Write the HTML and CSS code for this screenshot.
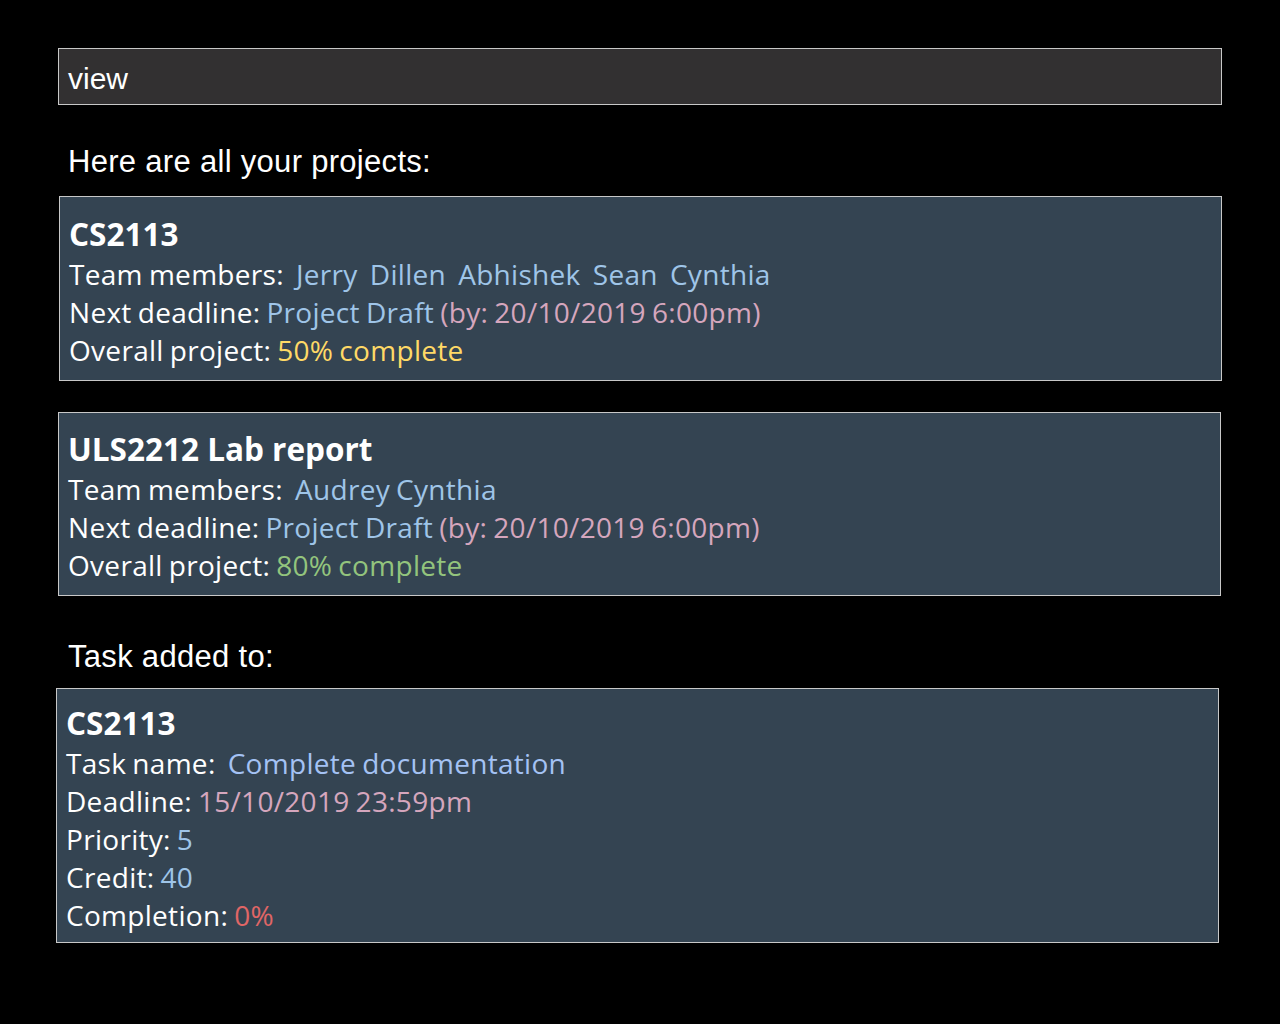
FILE: index.html
```html
<!DOCTYPE html>
<html>
<head>
<meta charset="utf-8">
<link rel="stylesheet" href="styles.css">
</head>
<body>
<main class="page">
  <div class="command">view</div>
  <p class="heading first">Here are all your projects:</p>
  <section class="card card-a">
    <h2 class="title">CS2113</h2>
    <div class="line">Team members:  <span class="blue">Jerry  Dillen  Abhishek  Sean  Cynthia</span></div>
    <div class="line">Next deadline: <span class="blue">Project Draft</span> <span class="pink">(by: 20/10/2019 6:00pm)</span></div>
    <div class="line">Overall project: <span class="yellow">50% complete</span></div>
  </section>
  <section class="card card-b">
    <h2 class="title">ULS2212 Lab report</h2>
    <div class="line">Team members:  <span class="blue">Audrey Cynthia</span></div>
    <div class="line">Next deadline: <span class="blue">Project Draft</span> <span class="pink">(by: 20/10/2019 6:00pm)</span></div>
    <div class="line">Overall project: <span class="green">80% complete</span></div>
  </section>
  <p class="heading second">Task added to:</p>
  <section class="card card-c">
    <h2 class="title">CS2113</h2>
    <div class="line">Task name:  <span class="cornflower">Complete documentation</span></div>
    <div class="line">Deadline: <span class="pink">15/10/2019 23:59pm</span></div>
    <div class="line">Priority: <span class="blue">5</span></div>
    <div class="line">Credit: <span class="blue">40</span></div>
    <div class="line">Completion: <span class="red">0%</span></div>
  </section>
</main>
</body>
</html>
```
FILE: styles.css
```css
html, body {
  margin: 0;
  padding: 0;
  background: #000;
}
.page {
  padding: 48px 58px 0 58px;
  display: flex;
  flex-direction: column;
}
.command {
  height: 55px;
  border: 1px solid #c8c8c8;
  background: #323031;
  color: #fff;
  font-family: "Liberation Sans", Arial, sans-serif;
  font-size: 30px;
  line-height: 60px;
  padding-left: 9px;
}
.heading {
  margin: 0;
  color: #fff;
  font-family: "Liberation Sans", Arial, sans-serif;
  font-size: 31px;
  letter-spacing: 0.3px;
  line-height: 34px;
  padding-left: 10px;
}
.heading.first { margin-top: 40px; margin-bottom: 17px; }
.heading.second { margin-top: 44px; margin-bottom: 14px; }
.card {
  border: 1px solid #c8c8c8;
  background: #344452;
  color: #fff;
  font-family: "Open Sans", sans-serif;
}
.card-a { margin-left: 1px; padding: 16px 9px 11px 9px; }
.card-b { margin-top: 31px; margin-right: 1px; padding: 15px 9px 11px 9px; }
.card-c { margin-left: -2px; margin-right: 3px; padding: 12px 9px 8px 9px; }
.card-c .title { line-height: 43px; }
.title {
  margin: 0;
  font-size: 31.5px;
  font-weight: 700;
  line-height: 42px;
}
.line {
  font-size: 28px;
  letter-spacing: 0.3px;
  word-spacing: -1.5px;
  line-height: 38px;
  white-space: pre;
}
.blue { color: #9fc5e8; }
.cornflower { color: #a4c2f4; }
.pink { color: #d5a6bd; }
.yellow { color: #ffd966; }
.green { color: #93c47d; }
.red { color: #e06666; }
```
